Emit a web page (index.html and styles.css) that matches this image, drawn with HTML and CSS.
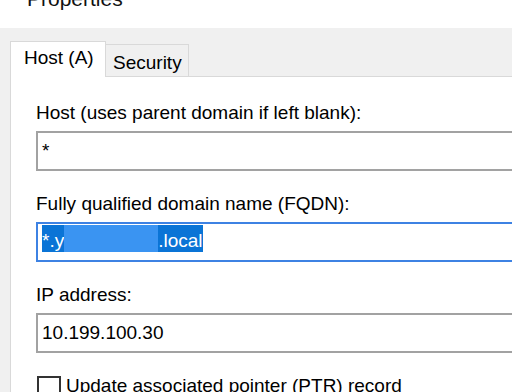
FILE: index.html
```html
<!DOCTYPE html>
<html lang="en">
<head>
    <meta charset="UTF-8">
    <meta name="viewport" content="width=device-width, initial-scale=1.0">
    <title>Properties</title>
    <link rel="stylesheet" href="styles.css">
</head>
<body>
    <div class="titlebar">
        <div class="title">Properties</div>
    </div>

    <div class="dialog">
        <div class="tabs">
            <div class="tab active">Host (A)</div>
            <div class="tab">Security</div>
        </div>

        <div class="panel">
            <div class="field">
                <label class="label">Host (uses parent domain if left blank):</label>
                <div class="edit">*</div>
            </div>
            <div class="field">
                <label class="label">Fully qualified domain name (FQDN):</label>
                <div class="edit focused">
                    <span class="sel"><span>*.y</span><span class="blur"></span><span>.local</span></span>
                </div>
            </div>
            <div class="field">
                <label class="label">IP address:</label>
                <div class="edit">10.199.100.30</div>
            </div>
            <div class="check-row">
                <span class="checkbox"></span>
                <span class="check-label">Update associated pointer (PTR) record</span>
            </div>
        </div>
    </div>
</body>
</html>
```

FILE: styles.css
```css
body {
    font-family: "Liberation Sans", Arial, sans-serif;
    font-size: 19px;
    line-height: 21px;
    color: #000;
    margin: 0;
    padding: 0;
    width: 512px;
    height: 392px;
    overflow: hidden;
    background-color: #f0f0f0;
}
.titlebar {
    height: 28px;
    background-color: #fff;
    overflow: hidden;
}
.title {
    font-size: 21px;
    line-height: 21px;
    margin-top: -12px;
    padding-left: 27px;
    color: #111;
}
.dialog {
    padding: 13px 0 0 10px;
}
.tabs {
    display: flex;
    align-items: flex-end;
    height: 35px;
}
.tab {
    box-sizing: border-box;
    height: 32px;
    width: 83px;
    padding: 7px 0 0 7px;
    border: 1px solid #d9d9d9;
    border-left: none;
    border-bottom: none;
    background-color: #f0f0f0;
    white-space: nowrap;
}
.tab.active {
    height: 36px;
    width: 96px;
    padding: 5px 0 0 13px;
    border-left: 1px solid #d9d9d9;
    margin-bottom: -1px;
    background-color: #fff;
    position: relative;
    z-index: 1;
}
.panel {
    width: 700px;
    height: 400px;
    padding: 25px 0 0 25px;
    border-top: 1px solid #d9d9d9;
    border-left: 1px solid #d9d9d9;
    background-color: #fff;
}
.field + .field {
    margin-top: 22px;
}
.label {
    display: block;
    white-space: nowrap;
}
.edit {
    box-sizing: border-box;
    height: 40px;
    margin-top: 8px;
    padding: 7px 4px 0;
    border: 2px solid #a2a2a2;
    white-space: nowrap;
}
.edit.focused {
    padding-top: 1px;
    border-color: #3d82e3;
}
.sel {
    display: inline-flex;
    align-items: flex-end;
    box-sizing: border-box;
    height: 27px;
    padding-bottom: 1px;
    background-color: #0a74d6;
    color: #fff;
}
.blur {
    align-self: stretch;
    width: 94px;
    margin-bottom: -1px;
    background-color: #3a94f2;
}
.check-row {
    display: flex;
    align-items: flex-start;
    margin-top: 23px;
}
.checkbox {
    box-sizing: border-box;
    width: 24px;
    height: 24px;
    margin-left: 1px;
    border: 2px solid #333;
    background-color: #fff;
}
.check-label {
    margin: -1px 0 0 5px;
    white-space: nowrap;
}
```
